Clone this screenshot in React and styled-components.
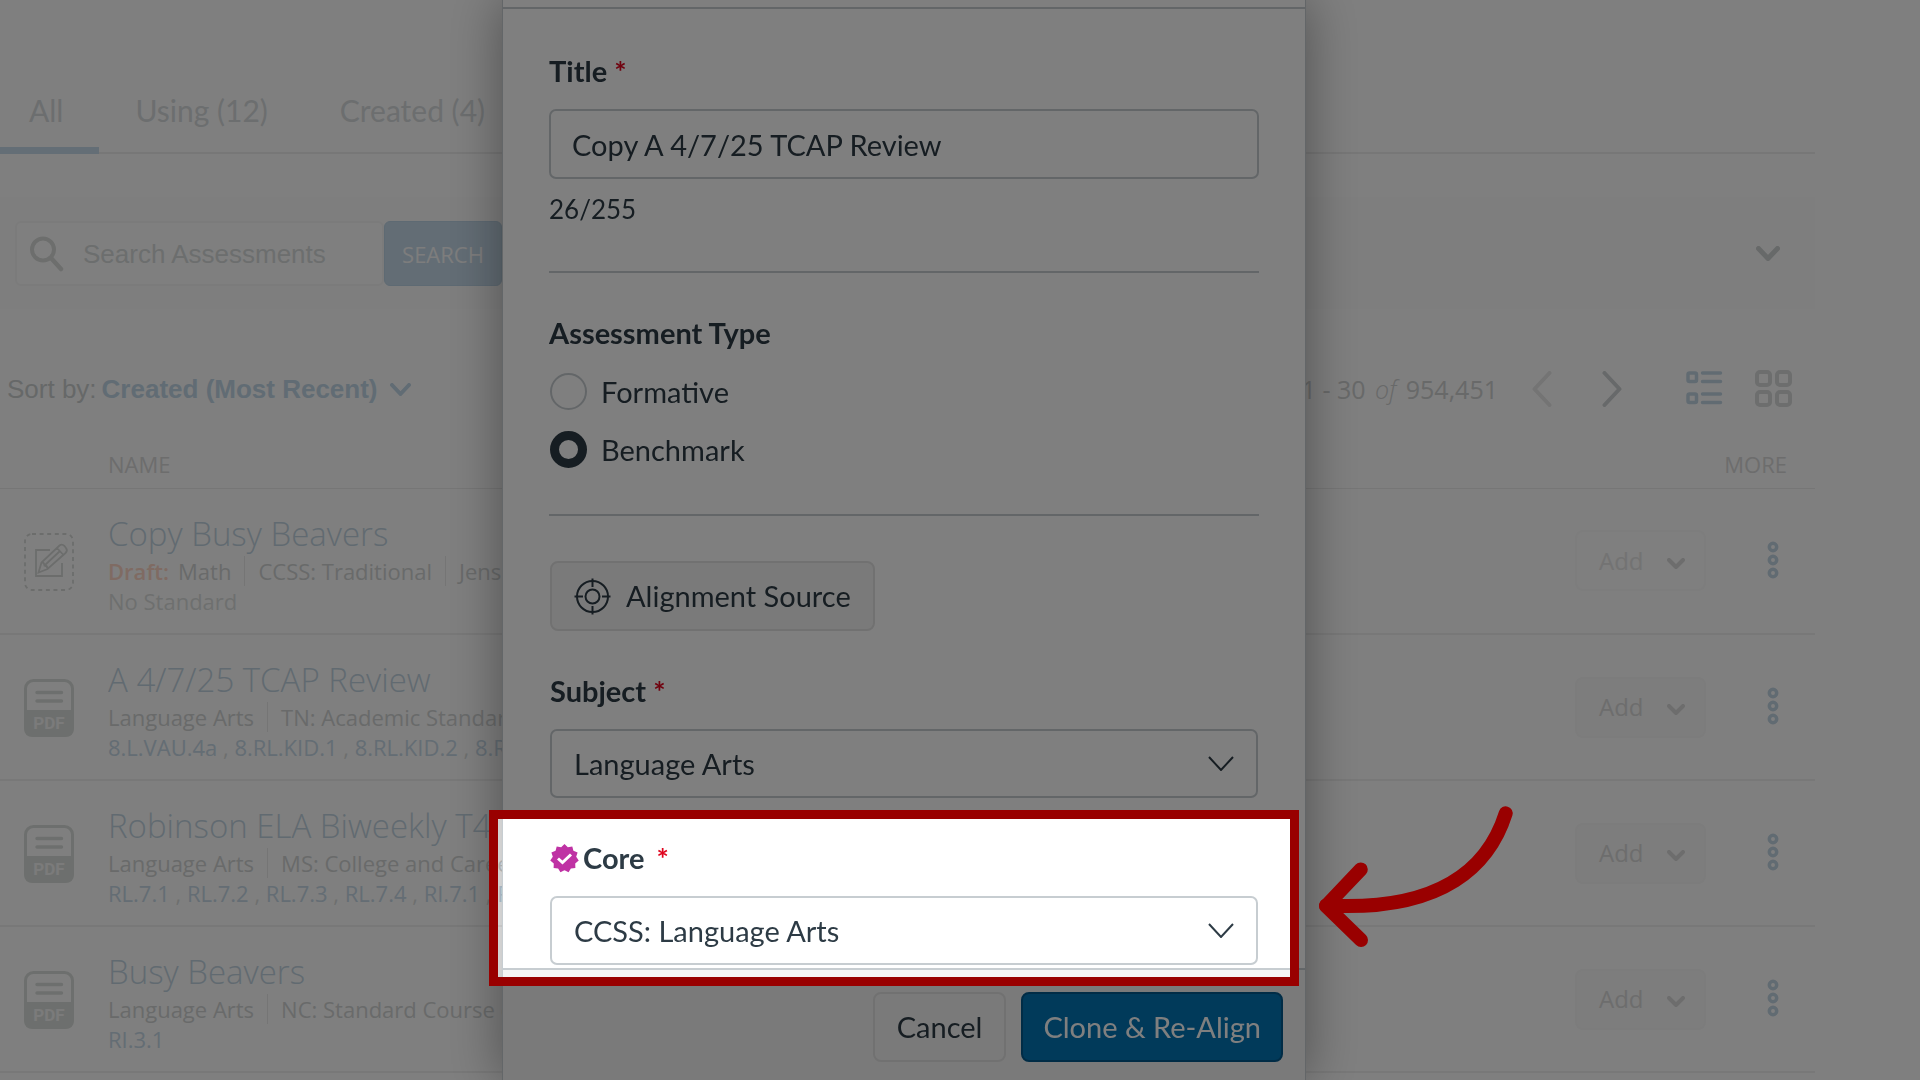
import styled, { createGlobalStyle, css } from "styled-components";

const GlobalStyle = createGlobalStyle`
  * {
    box-sizing: border-box;
  }

  body {
    margin: 0;
    overflow: hidden;
    background: #fff;
  }

  button, input, select {
    margin: 0;
    font: inherit;
  }
`;

const lato = `Lato, "Liberation Sans", sans-serif`;
const openSans = `"Open Sans", "Noto Sans", sans-serif`;
const arial = `"Liberation Sans", Arial, sans-serif`;

/* ---------- library page ---------- */

const Page = styled.main`
  min-height: 100vh;
  padding-right: 105px;
  font-family: ${openSans};
  font-size: 22px;
  line-height: 30px;
  color: #d2d5d5;
`;

const Tabs = styled.nav`
  display: flex;
  padding: 92px 0 0;
  border-bottom: 2px solid #efefef;
`;

const Tab = styled.button`
  margin: 0 0 -2px;
  padding: 0 36px 19px;
  border: 0;
  border-bottom: 7px solid ${(props) => (props.$active ? "#c8dcec" : "transparent")};
  background: none;
  font-family: ${lato};
  font-size: 30px;
  line-height: 36px;
  color: #d8dcde;

  &:first-child {
    padding-left: 29px;
  }
`;

const SearchBand = styled.section`
  display: flex;
  align-items: center;
  justify-content: space-between;
  margin-top: 43px;
  padding: 24px 35px 23px 15px;
  background: #fdfdfd;
`;

const SearchForm = styled.form`
  display: flex;
`;

const SearchField = styled.label`
  display: flex;
  align-items: center;
  width: 369px;
  height: 65px;
  padding: 0 13px;
  gap: 19px;
  border: 2px solid #f7f7f7;
  border-radius: 6px;
  background: #fff;
`;

const SearchInput = styled.input`
  flex: 1;
  min-width: 0;
  padding: 0;
  border: 0;
  outline: 0;
  background: none;
  font-family: ${arial};
  font-size: 26px;
  color: #d8dcdc;

  &::placeholder {
    color: #d8dcdc;
    opacity: 1;
  }
`;

const SearchButton = styled.button`
  width: 118px;
  border: 1px solid #bdd4e6;
  border-radius: 6px;
  background: #c6daea;
  color: #fbfbfb;
`;

const IconButton = styled.button`
  display: inline-flex;
  padding: 0;
  border: 0;
  background: none;
`;

const ListBar = styled.section`
  display: flex;
  align-items: center;
  justify-content: space-between;
  height: 50px;
  margin-top: 55px;
  padding: 0 23px 0 7px;
`;

const Sort = styled.div`
  display: flex;
  align-items: center;
  gap: 5px;
  font-family: ${arial};
  font-size: 26px;
  color: #cdd1d1;
`;

const SortButton = styled.button`
  display: flex;
  align-items: center;
  gap: 12px;
  padding: 0;
  border: 0;
  background: none;
  font-weight: bold;
  color: #c3d8e8;
`;

const Pager = styled.div`
  display: flex;
  align-items: center;
  font-size: 25px;
  color: #d0d2d2;

  em {
    margin: 0 3px;
    font-weight: 300;
  }
`;

const PagerArrows = styled.div`
  display: flex;
  gap: 50px;
  margin: 0 64px 0 34px;
`;

const ViewSwitch = styled.div`
  display: flex;
  gap: 32px;
`;

const Table = styled.table`
  width: 100%;
  table-layout: fixed;
  border-collapse: collapse;
`;

const HeadCell = styled.th`
  width: ${(props) => props.$width || "auto"};
  height: 74px;
  padding: 0 ${(props) => (props.$right ? "28px" : "0")} 9px 0;
  border-bottom: 1px solid #ececec;
  vertical-align: bottom;
  text-align: ${(props) => (props.$right ? "right" : "left")};
  font-size: 22px;
  font-weight: normal;
  color: #dadada;
`;

const Cell = styled.td`
  height: 146px;
  padding: 0 ${(props) => (props.$right ? "28px" : "0")} 0 0;
  border-bottom: 2px solid #f1f1f1;
  text-align: ${(props) => (props.$right ? "right" : "left")};
  vertical-align: middle;
  white-space: nowrap;

  svg {
    display: block;
  }
`;

const IconCell = styled(Cell)`
  padding-top: 2px;
  padding-left: 24px;
`;

const NameCell = styled(Cell)`
  padding-top: 6px;
  overflow: hidden;
`;

const ItemTitle = styled.a`
  display: block;
  font-size: 33px;
  font-weight: 300;
  line-height: 44px;
  text-decoration: none;
  color: #c3d5e2;
`;

const Meta = styled.div`
  display: flex;

  span + span {
    margin-left: 13px;
    padding-left: 13px;
    border-left: 1px solid #eaeaea;
  }
`;

const Draft = styled.strong`
  margin-right: 9px;
  font-weight: 600;
  color: #ffd6c6;
`;

const Standards = styled.div`
  color: #dcdfde;

  a {
    text-decoration: none;
    color: #c8dae8;
  }
`;

const AddButton = styled.button`
  display: flex;
  align-items: center;
  justify-content: space-between;
  width: 131px;
  height: 61px;
  padding: 0 19px 0 22px;
  border: 2px solid #fafafa;
  border-radius: 8px;
  background: #fefefe;
  font-size: 24px;
  color: #e6e6e6;

  svg {
    margin-top: 5px;
  }

  ${(props) =>
    !props.disabled &&
    css`
      border-color: #f8f8f8;
      background: #fbfbfb;
      color: #dadada;
    `}
`;

const MoreButton = styled(IconButton)`
  width: 28px;
  justify-content: center;
`;

/* ---------- clone dialog ---------- */

const Backdrop = styled.div`
  position: fixed;
  inset: 0;
  display: flex;
  justify-content: center;
  align-items: flex-start;
  padding-right: 112px;
  overflow: hidden;
`;

const Dialog = styled.div`
  width: 100%;
  max-width: 804px;
  border: solid #c7cdd1;
  border-width: 0 1px;
  background: #fff;
  box-shadow: 0 0 50px rgba(0, 0, 0, 0.38);
  font-family: ${lato};
  font-size: 29px;
  line-height: 36px;
  color: #2d3b45;
`;

const DialogHeader = styled.div`
  height: 9px;
  border-bottom: 2px solid #c7cdd1;
`;

const DialogBody = styled.form`
  padding: 44px 46px 3px;
`;

const DialogFooter = styled.div`
  display: flex;
  justify-content: flex-end;
  gap: 15px;
  padding: 22px 22px 20px;
  border-top: 2px solid #c7cdd1;
  background: #f5f5f5;
`;

const Label = styled.label`
  display: block;
  margin-bottom: 20px;
  font-weight: bold;
`;

const BadgeLabel = styled(Label)`
  display: flex;
  align-items: center;
  gap: 4px;
`;

const Star = styled.span`
  margin-left: ${(props) => (props.$wide ? "8px" : "0")};
  color: #e0061f;
`;

const TextInput = styled.input`
  display: block;
  width: 100%;
  height: 70px;
  padding: 0 21px;
  border: 2px solid #c7cdd1;
  border-radius: 7px;
  outline: 0;
  background: #fff;
  color: inherit;
`;

const Counter = styled.div`
  margin-top: 14px;
  font-size: 26px;
  line-height: 32px;
`;

const Divider = styled.hr`
  margin: 46px 0 42px;
  border: 0;
  border-top: 2px solid #c7cdd1;
`;

const RadioGroup = styled.fieldset`
  display: flex;
  flex-direction: column;
  gap: 21px;
  min-width: 0;
  margin: 0;
  padding: 0 1px;
  border: 0;
`;

const Legend = styled.legend`
  margin: 0 0 22px -1px;
  padding: 0;
  font-weight: bold;
`;

const RadioLabel = styled.label`
  display: flex;
  align-items: center;
  gap: 14px;
`;

const Radio = styled.input`
  appearance: none;
  width: 37px;
  height: 37px;
  margin: 0;
  border: 2px solid #c7cdd1;
  border-radius: 50%;
  background: #fff;

  &:checked {
    border: 9px solid #2d3b45;
  }
`;

const Alignment = styled.section`
  display: flex;
  flex-direction: column;
  gap: 42px;
  padding: 3px 1px 0;
`;

const Button = styled.button`
  display: inline-flex;
  align-items: center;
  align-self: flex-start;
  gap: 15px;
  height: 70px;
  padding: 0 ${(props) => (props.$primary ? "20px" : "22px")};
  border: 2px solid ${(props) => (props.$primary ? "#02598c" : "#e2e2e2")};
  border-radius: 8px;
  background: ${(props) => (props.$primary ? "#0374b5" : "#f5f5f5")};
  color: ${(props) => (props.$primary ? "#fff" : "#2d3b45")};
`;

const Field = styled.div`
  position: relative;
`;

const SelectBox = styled.div`
  display: grid;
  align-items: center;

  > * {
    grid-area: 1 / 1;
  }

  svg {
    justify-self: end;
    margin-right: 24px;
    pointer-events: none;
  }
`;

const Select = styled.select`
  appearance: none;
  width: 100%;
  height: 69px;
  padding: 0 22px;
  border: 2px solid #c7cdd1;
  border-radius: 7px;
  outline: 0;
  background: #fff;
  color: inherit;
`;

/* dims everything around the field it sits on */
const Spotlight = styled.div`
  position: absolute;
  z-index: 2;
  top: -30px;
  right: -41px;
  bottom: -21px;
  left: -61px;
  border: 9px solid #990000;
  box-shadow: 0 0 0 3000px rgba(0, 0, 0, 0.5);
  pointer-events: none;
`;

const Arrow = styled.svg`
  position: absolute;
  top: -28px;
  left: 100%;
  margin-left: 10px;
`;

const Chevron = ({ width, height, stroke, weight, round = true }) => (
  <svg width={width} height={height} viewBox={`0 0 ${width} ${height}`} fill="none" stroke={stroke} strokeWidth={weight} strokeLinecap={round ? "round" : "butt"} strokeLinejoin={round ? "round" : "miter"} aria-hidden="true">
    <path d={`M${weight / 2} ${weight / 2} L${width / 2} ${height - weight / 2} L${width - weight / 2} ${weight / 2}`} />
  </svg>
);

const PageArrow = ({ stroke, back }) => (
  <svg width="20" height="36" viewBox="0 0 20 36" fill="none" stroke={stroke} strokeWidth="4" strokeLinecap="round" strokeLinejoin="round" aria-hidden="true">
    <path d={back ? "M17.5 2 L2.5 18 L17.5 34" : "M2.5 2 L17.5 18 L2.5 34"} />
  </svg>
);

const SearchIcon = () => (
  <svg width="34" height="36" viewBox="0 0 34 36" fill="none" stroke="#dadddb" strokeLinecap="round" aria-hidden="true">
    <circle cx="13" cy="13.5" r="11" strokeWidth="4" />
    <path d="M21 22 L31 33" strokeWidth="4.5" />
  </svg>
);

const DraftIcon = () => (
  <svg width="50" height="58" viewBox="0 0 50 58" fill="none" stroke="#d8dbd9" aria-hidden="true">
    <rect x="1" y="1" width="48" height="56" rx="7" strokeWidth="1.8" strokeDasharray="4 3.6" />
    <path d="M26 17 H12 V43 H38 V30" strokeWidth="1.8" />
    <path d="M14.5 39.5 L17.5 29.5 L35.5 12.5 Q38 10.5 40.5 13 L42 15 Q44 17.5 41.5 20 L23.5 36 Z M33 15 L39 21.5 M17.5 29.5 Q20 29 20.5 32.5 Q23.5 32.5 23.5 36 M20.5 32.5 L36 18" strokeWidth="1.8" />
  </svg>
);

const PdfIcon = () => (
  <svg width="50" height="58" viewBox="0 0 50 58" aria-hidden="true">
    <rect x="1.5" y="1.5" width="47" height="55" rx="8" fill="#fff" stroke="#dbdfdc" strokeWidth="3" />
    <path d="M0 31 H50 V49 Q50 58 41 58 H9 Q0 58 0 49 Z" fill="#dbdfdc" />
    <path d="M13 13.5 H37.5 M13 22 H37.5" stroke="#dbdfdc" strokeWidth="3.5" strokeLinecap="round" />
    <text x="25" y="50" textAnchor="middle" fontFamily="Roboto, sans-serif" fontSize="17" fontWeight="bold" fill="#f6f6f6">PDF</text>
  </svg>
);

const ListIcon = () => (
  <svg width="37" height="38" viewBox="0 0 37 38" fill="none" stroke="#c3d6e4" aria-hidden="true">
    <rect x="2" y="3" width="8.5" height="8.5" rx="1.5" strokeWidth="3.5" />
    <rect x="2" y="24" width="8.5" height="8.5" rx="1.5" strokeWidth="3.5" />
    <path d="M16.5 3 H34.5 M16.5 11.5 H34.5 M16.5 24 H34.5 M16.5 32.5 H34.5" strokeWidth="3.5" strokeLinecap="round" />
  </svg>
);

const GridIcon = () => (
  <svg width="37" height="39" viewBox="0 0 37 39" fill="none" stroke="#dadcdc" strokeWidth="4" aria-hidden="true">
    <rect x="2" y="2" width="13" height="13" rx="3" />
    <rect x="22" y="2" width="13" height="13" rx="3" />
    <rect x="2" y="22" width="13" height="13" rx="3" />
    <rect x="22" y="22" width="13" height="13" rx="3" />
  </svg>
);

const DotsIcon = () => (
  <svg width="12" height="42" viewBox="0 0 12 42" fill="none" stroke="#c3d6e4" strokeWidth="3.5" aria-hidden="true">
    <circle cx="6" cy="10" r="3.7" />
    <circle cx="6" cy="23" r="3.7" />
    <circle cx="6" cy="36" r="3.7" />
  </svg>
);

const TargetIcon = () => (
  <svg width="37" height="37" viewBox="0 0 37 37" fill="none" stroke="#2d3b45" strokeWidth="2" aria-hidden="true">
    <circle cx="18.5" cy="18.5" r="15.5" />
    <circle cx="18.5" cy="18.5" r="7" />
    <path d="M18.5 0.5 V9 M18.5 28 V36.5 M0.5 18.5 H9 M28 18.5 H36.5" />
  </svg>
);

// eleven-pointed badge outline
const badgePoints = Array.from({ length: 22 }, (_, i) => {
  const r = i % 2 ? 11.8 : 14.4;
  const a = (Math.PI * i) / 11 - Math.PI / 2;
  return `${(14.5 + r * Math.cos(a)).toFixed(2)},${(14.5 + r * Math.sin(a)).toFixed(2)}`;
}).join(" ");

const BadgeIcon = () => (
  <svg width="29" height="29" viewBox="0 0 29 29" aria-hidden="true">
    <polygon points={badgePoints} fill="#bf32a4" />
    <path d="M8 14.5 L12.5 18.5 L21 10.5" fill="none" stroke="#fff" strokeWidth="3" />
  </svg>
);

const assessments = [
  {
    title: "Copy Busy Beavers",
    draft: true,
    meta: ["Math", "CCSS: Traditional", "Jens"],
    standards: [],
  },
  {
    title: "A 4/7/25 TCAP Review",
    meta: ["Language Arts", "TN: Academic Standards"],
    standards: ["8.L.VAU.4a", "8.RL.KID.1", "8.RL.KID.2", "8.RL"],
  },
  {
    title: "Robinson ELA Biweekly T4",
    meta: ["Language Arts", "MS: College and Career"],
    standards: ["RL.7.1", "RL.7.2", "RL.7.3", "RL.7.4", "RI.7.1", "RI"],
  },
  {
    title: "Busy Beavers",
    meta: ["Language Arts", "NC: Standard Course of"],
    standards: ["RI.3.1"],
  },
];

const AssessmentRow = ({ item }) => (
  <tr>
    <IconCell>{item.draft ? <DraftIcon /> : <PdfIcon />}</IconCell>
    <NameCell>
      <ItemTitle href="#">{item.title}</ItemTitle>
      <Meta>
        {item.draft && <Draft>Draft:</Draft>}
        {item.meta.map((text) => (
          <span key={text}>{text}</span>
        ))}
      </Meta>
      <Standards>
        {item.standards.length === 0 && "No Standard"}
        {item.standards.map((code, i) => (
          <span key={code}>
            {i > 0 && " , "}
            <a href="#">{code}</a>
          </span>
        ))}
      </Standards>
    </NameCell>
    <Cell>
      <AddButton type="button" disabled={item.draft}>
        Add
        <Chevron width={18} height={11} weight={4} stroke="#dadada" />
      </AddButton>
    </Cell>
    <Cell $right>
      <MoreButton type="button" aria-label="More">
        <DotsIcon />
      </MoreButton>
    </Cell>
  </tr>
);

const Library = () => (
  <Page>
    <Tabs>
      <Tab type="button" $active>All</Tab>
      <Tab type="button">Using (12)</Tab>
      <Tab type="button">Created (4)</Tab>
    </Tabs>

    <SearchBand>
      <SearchForm>
        <SearchField>
          <SearchIcon />
          <SearchInput type="text" placeholder="Search Assessments" aria-label="Search Assessments" />
        </SearchField>
        <SearchButton type="button">SEARCH</SearchButton>
      </SearchForm>
      <IconButton type="button" aria-label="Show filters">
        <Chevron width={24} height={15} weight={5} stroke="#cfd2d2" />
      </IconButton>
    </SearchBand>

    <ListBar>
      <Sort>
        Sort by:
        <SortButton type="button">
          Created (Most Recent)
          <Chevron width={21} height={13} weight={4} stroke="#c3d8e8" />
        </SortButton>
      </Sort>
      <Pager>
        <span>1 - 30 <em>of</em> 954,451</span>
        <PagerArrows>
          <IconButton type="button" aria-label="Previous page">
            <PageArrow stroke="#e8e8e8" back />
          </IconButton>
          <IconButton type="button" aria-label="Next page">
            <PageArrow stroke="#cfd2d4" />
          </IconButton>
        </PagerArrows>
        <ViewSwitch>
          <IconButton type="button" aria-label="List view">
            <ListIcon />
          </IconButton>
          <IconButton type="button" aria-label="Grid view">
            <GridIcon />
          </IconButton>
        </ViewSwitch>
      </Pager>
    </ListBar>

    <Table>
      <thead>
        <tr>
          <HeadCell $width="108px" />
          <HeadCell>NAME</HeadCell>
          <HeadCell $width="131px" />
          <HeadCell $width="109px" $right>MORE</HeadCell>
        </tr>
      </thead>
      <tbody>
        {assessments.map((item) => (
          <AssessmentRow key={item.title} item={item} />
        ))}
      </tbody>
    </Table>
  </Page>
);

const CloneDialog = () => (
  <Backdrop>
    <Dialog role="dialog" aria-label="Clone & Re-Align">
      <DialogHeader />
      <DialogBody>
        <Label htmlFor="title">Title <Star>*</Star></Label>
        <TextInput id="title" type="text" defaultValue="Copy A 4/7/25 TCAP Review" />
        <Counter>26/255</Counter>

        <Divider />

        <RadioGroup>
          <Legend>Assessment Type</Legend>
          <RadioLabel>
            <Radio type="radio" name="type" value="formative" />
            Formative
          </RadioLabel>
          <RadioLabel>
            <Radio type="radio" name="type" value="benchmark" defaultChecked />
            Benchmark
          </RadioLabel>
        </RadioGroup>

        <Divider />

        <Alignment>
          <Button type="button">
            <TargetIcon />
            Alignment Source
          </Button>

          <Field>
            <Label htmlFor="subject">Subject <Star>*</Star></Label>
            <SelectBox>
              <Select id="subject" defaultValue="Language Arts">
                <option>Language Arts</option>
              </Select>
              <Chevron width={26} height={15} weight={2} stroke="#2d3b45" round={false} />
            </SelectBox>
          </Field>

          <Field>
            <BadgeLabel htmlFor="core">
              <BadgeIcon />
              Core
              <Star $wide>*</Star>
            </BadgeLabel>
            <SelectBox>
              <Select id="core" defaultValue="CCSS: Language Arts">
                <option>CCSS: Language Arts</option>
              </Select>
              <Chevron width={26} height={15} weight={2} stroke="#2d3b45" round={false} />
            </SelectBox>
            <Spotlight>
              <Arrow width="240" height="180" viewBox="0 0 240 180" fill="none" stroke="#990000" strokeWidth="14" strokeLinecap="round" strokeLinejoin="round">
                <path d="M205.7 22.3 C190 72 146 121 26 114.5" />
                <path d="M60.8 78.4 L26 115 L61 149" />
              </Arrow>
            </Spotlight>
          </Field>
        </Alignment>
      </DialogBody>
      <DialogFooter>
        <Button type="button">Cancel</Button>
        <Button type="button" $primary>Clone &amp; Re-Align</Button>
      </DialogFooter>
    </Dialog>
  </Backdrop>
);

const App = () => {
  return (
    <>
      <GlobalStyle />
      <Library />
      <CloneDialog />
    </>
  );
};

export default App;
